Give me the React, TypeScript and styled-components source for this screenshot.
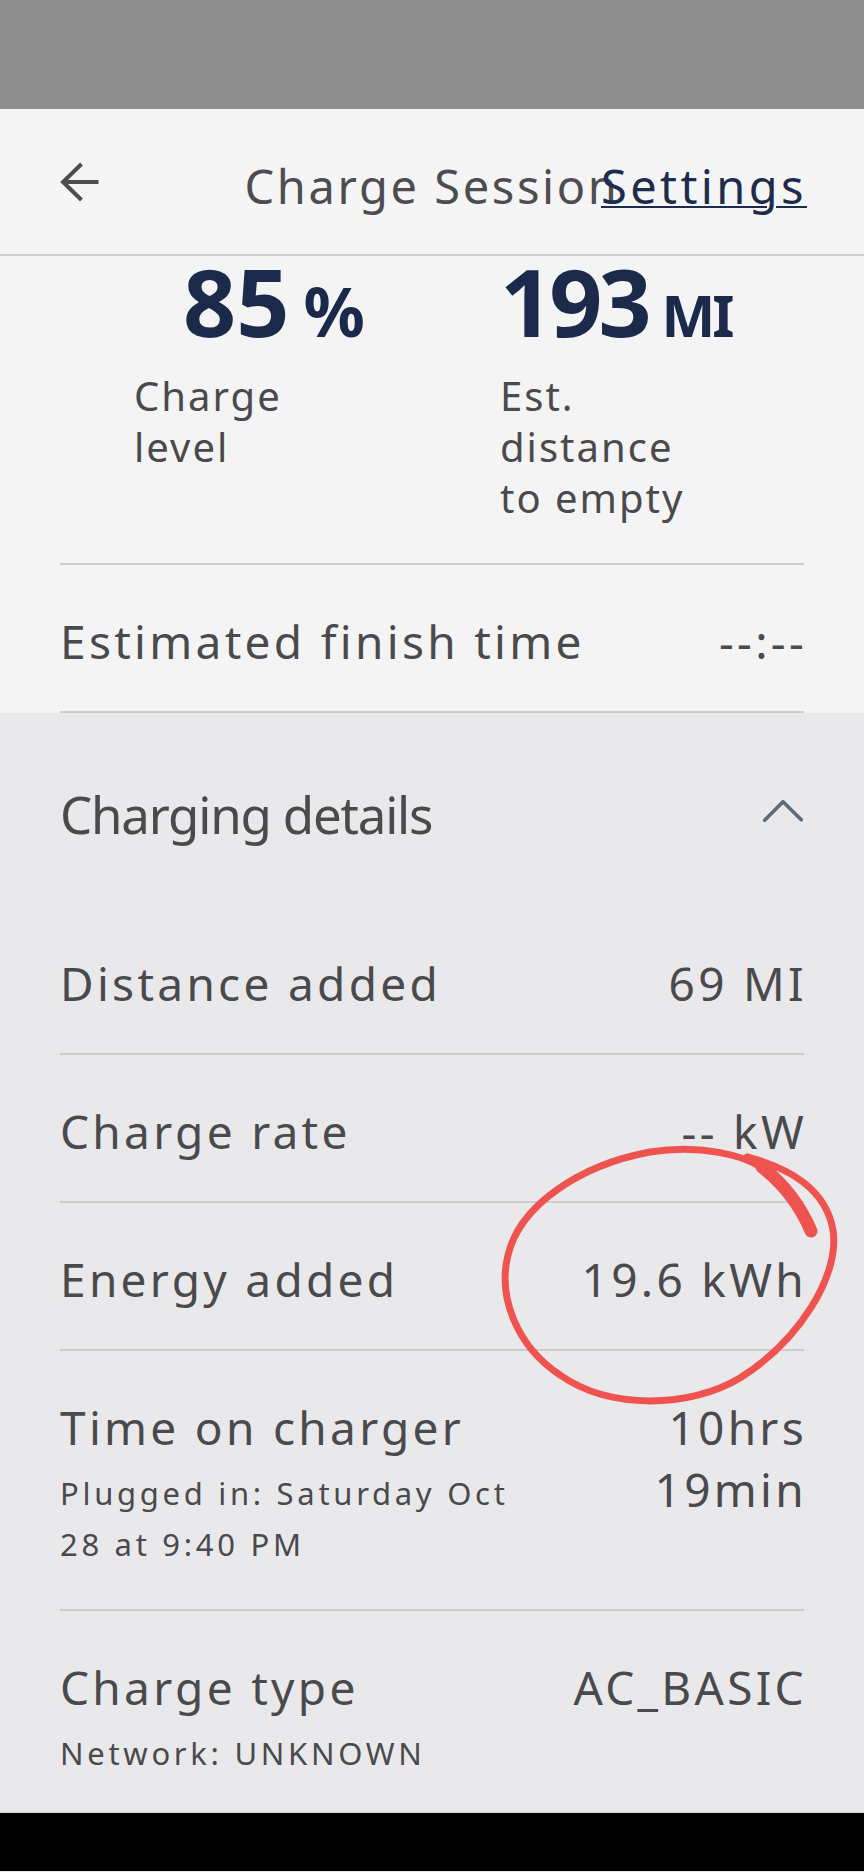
import React from "react";
import styled, { createGlobalStyle } from "styled-components";

const GlobalStyle = createGlobalStyle`
  html, body {
    margin: 0;
    padding: 0;
    background: #e9e9eb;
  }
  * {
    box-sizing: border-box;
  }
`;

const Page = styled.div`
  position: relative;
  width: 864px;
  min-height: 1872px;
  font-family: "Noto Sans", "Open Sans", sans-serif;
  color: #4a4a4c;
  background: #e9e9eb;
`;

const StatusBar = styled.div`
  height: 109px;
  background: #8e8e8e;
`;

const Header = styled.header`
  display: grid;
  grid-template-columns: 1fr;
  align-items: center;
  height: 147px;
  padding: 8px 60px 0;
  background: #f5f5f5;
  border-bottom: 2px solid #cfcfcf;
  & > * {
    grid-area: 1 / 1;
  }
`;

const BackButton = styled.button`
  justify-self: start;
  display: flex;
  width: 40px;
  height: 40px;
  margin: -8px 0 0 0;
  padding: 0;
  border: none;
  background: none;
`;

const Title = styled.h1`
  justify-self: center;
  margin: 0;
  font-size: 47px;
  line-height: 62px;
  font-weight: 400;
  letter-spacing: 2.6px;
  color: #4d4d4f;
`;

const SettingsLink = styled.a`
  justify-self: end;
  margin-right: -3px;
  font-size: 47px;
  line-height: 62px;
  letter-spacing: 3.4px;
  color: #1d2c4c;
  text-decoration: underline;
  text-decoration-thickness: 2px;
  text-underline-offset: 2px;
`;

const Summary = styled.section`
  padding: 0 60px;
  background: #f4f4f4;
`;

const Stats = styled.div`
  display: grid;
  grid-template-columns: 366px 1fr;
  align-items: start;
  padding: 0 0 40px 74px;
  border-bottom: 2px solid #cdcdcd;
`;

const Stat = styled.div`
  display: flex;
  flex-direction: column;
`;

const StatValue = styled.div<{ $indent: number }>`
  display: flex;
  align-items: baseline;
  margin-left: ${(p) => p.$indent}px;
  height: 90px;
  color: #1b2a4a;
  font-weight: 700;
`;

const StatNumber = styled.span<{ $spacing: number }>`
  font-size: 93px;
  line-height: 90px;
  letter-spacing: ${(p) => p.$spacing}px;
`;

const StatUnit = styled.span<{ $size: number }>`
  margin-left: 14px;
  font-size: ${(p) => p.$size}px;
  letter-spacing: -3px;
`;

const StatLabel = styled.div`
  max-width: 220px;
  margin-top: 24px;
  font-size: 40px;
  line-height: 51px;
  letter-spacing: 2px;
`;

const Row = styled.div<{ $last?: boolean }>`
  display: flex;
  justify-content: space-between;
  align-items: flex-start;
  padding: 45px 0 ${(p) => (p.$last ? "32px" : "39px")};
  border-bottom: ${(p) => (p.$last ? "none" : "2px solid #cdcdcd")};
`;

const LabelBlock = styled.div`
  display: flex;
  flex-direction: column;
`;

const RowLabel = styled.div`
  font-size: 46px;
  line-height: 62px;
  letter-spacing: 3.3px;
`;

const SubText = styled.div`
  max-width: 480px;
  margin-top: 10px;
  font-size: 31px;
  line-height: 51px;
  letter-spacing: 3.7px;
`;

const RowValue = styled.div`
  margin-right: -3px;
  font-size: 46px;
  line-height: 62px;
  letter-spacing: 3.3px;
  text-align: right;
  white-space: pre-line;
`;

const Details = styled.section`
  padding: 0 60px;
  background: #e9e9eb;
`;

const DetailsHeader = styled.div`
  display: flex;
  justify-content: space-between;
  align-items: center;
  padding: 69px 0 61px;
`;

const DetailsTitle = styled.h2`
  margin: 0;
  font-size: 51px;
  line-height: 64px;
  font-weight: 400;
  letter-spacing: -1.2px;
  color: #4a4a4c;
`;

const Chevron = styled.svg`
  width: 42px;
  height: 24px;
  margin-bottom: 6px;
`;

const NavBar = styled.div`
  height: 60px;
  background: #000;
  border-top: 2px solid #dcdcde;
`;

const Annotation = styled.svg`
  position: absolute;
  left: 0;
  top: 0;
  width: 864px;
  height: 1872px;
  pointer-events: none;
`;

const rows = [
  { label: "Distance added", value: "69 MI" },
  { label: "Charge rate", value: "-- kW" },
  { label: "Energy added", value: "19.6 kWh" },
  {
    label: "Time on charger",
    value: "10hrs\n19min",
    sub: "Plugged in: Saturday Oct 28 at 9:40 PM",
  },
  { label: "Charge type", value: "AC_BASIC", sub: "Network: UNKNOWN" },
];

function App() {
  return (
    <Page>
      <GlobalStyle />
      <StatusBar />
      <Header>
        <BackButton aria-label="Back">
          <svg width="40" height="40" viewBox="0 0 40 40" fill="none">
            <path
              d="M38.5 20 H3 M21.5 2 L3 20 L21.5 38"
              stroke="#4d4d4f"
              strokeWidth="4"
            />
          </svg>
        </BackButton>
        <Title>Charge Session</Title>
        <SettingsLink>Settings</SettingsLink>
      </Header>

      <Summary>
        <Stats>
          <Stat>
            <StatValue $indent={49}>
              <StatNumber $spacing={0}>85</StatNumber>
              <StatUnit $size={68}>%</StatUnit>
            </StatValue>
            <StatLabel>Charge level</StatLabel>
          </Stat>
          <Stat>
            <StatValue $indent={0}>
              <StatNumber $spacing={-4}>193</StatNumber>
              <StatUnit $size={57}>MI</StatUnit>
            </StatValue>
            <StatLabel>Est. distance to empty</StatLabel>
          </Stat>
        </Stats>
        <Row>
          <RowLabel>Estimated finish time</RowLabel>
          <RowValue>--:--</RowValue>
        </Row>
      </Summary>

      <Details>
        <DetailsHeader>
          <DetailsTitle>Charging details</DetailsTitle>
          <Chevron viewBox="0 0 42 24" fill="none">
            <path
              d="M2.7 21.3 L21 2.7 L39.3 20.7"
              stroke="#5b6a7c"
              strokeWidth="3.6"
              strokeLinecap="round"
              strokeLinejoin="round"
            />
          </Chevron>
        </DetailsHeader>
        {rows.map((r, i) => (
          <Row key={r.label} $last={i === rows.length - 1}>
            <LabelBlock>
              <RowLabel>{r.label}</RowLabel>
              {r.sub && <SubText>{r.sub}</SubText>}
            </LabelBlock>
            <RowValue>{r.value}</RowValue>
          </Row>
        ))}
      </Details>

      <NavBar />

      <Annotation viewBox="0 0 864 1872" fill="none">
        <path
          d="M747 1157 C790 1168, 826 1190, 833 1230 C840 1275, 800 1340, 740 1378 C690 1408, 610 1410, 560 1375 C515 1345, 498 1295, 508 1255 C520 1205, 580 1165, 650 1152 C700 1144, 745 1155, 765 1170"
          stroke="#ef5350"
          strokeWidth="7"
          strokeLinecap="round"
        />
        <path
          d="M762 1167 C785 1185, 800 1205, 811 1231"
          stroke="#ef5350"
          strokeWidth="13"
          strokeLinecap="round"
        />
      </Annotation>
    </Page>
  );
}

export default App;
